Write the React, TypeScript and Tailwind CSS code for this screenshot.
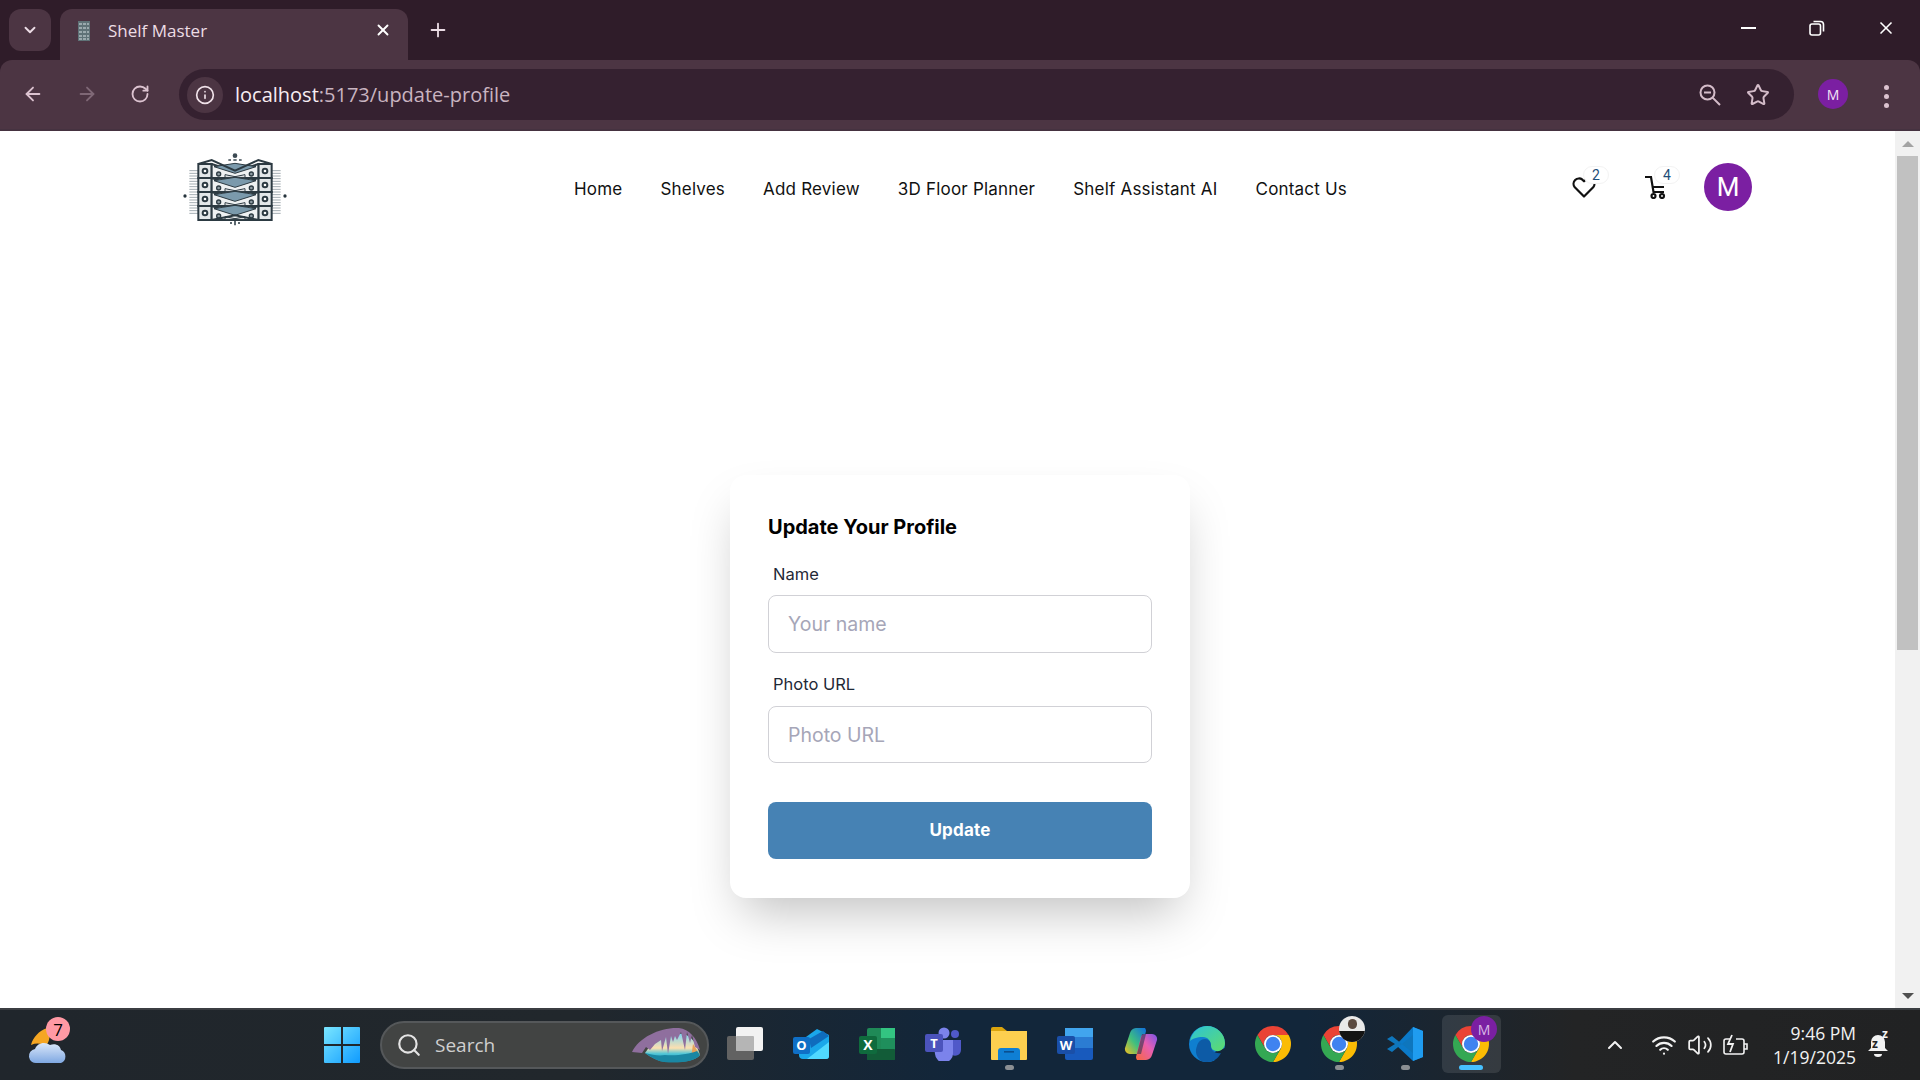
import { ArrowLeft, ArrowRight, ChevronDown, ChevronUp, Info, Plus, RotateCw, Search, Star, Volume2, Wifi, X } from 'lucide-react';
import type { ReactNode } from 'react';

const navLinks = ['Home', 'Shelves', 'Add Review', '3D Floor Planner', 'Shelf Assistant AI', 'Contact Us'];

function ShelfLogo({ size = 130 }: { size?: number }) {
  const levels = [72, 114, 156, 198];
  const hatch = [92, 100, 108, 116, 124, 132, 140, 148, 156, 164, 172, 180, 188, 196, 204, 212, 220];
  return (
    <svg width={size} height={(size * 100) / 130} viewBox="0 0 390 300" className="shrink-0">
      {hatch.map((y) => (
        <g key={y} stroke="#a3adb2" strokeWidth="3">
          <line x1="58" y1={y} x2="84" y2={y} />
          <line x1="304" y1={y} x2="332" y2={y} />
        </g>
      ))}
      <circle cx="45" cy="168" r="5" fill="#26343c" />
      <circle cx="345" cy="168" r="5" fill="#26343c" />
      <circle cx="195" cy="47" r="7" fill="#3c4a53" />
      <path d="M175 60h8M190 60h10M207 60h8M195 242v14M183 246v6M207 246v6" stroke="#3c4a53" strokeWidth="5" />
      {levels.map((y) => (
        <g key={y} stroke="#2c3a42" strokeWidth="6" fill="#fff">
          <rect x="85" y={y} width="40" height="42" fill="#e3e7e9" />
          <rect x="265" y={y} width="40" height="42" fill="#e3e7e9" />
          <path d={`M125 ${y}L195 ${y + 22}L265 ${y}V${y + 42}H125Z`} fill="#eef1f2" />
          <path d={`M132 ${y + 8}L195 ${y + 28}L258 ${y + 8}L195 ${y - 2}Z`} fill="#7b9aac" strokeWidth="3" />
          <path d={`M165 ${y + 32}L195 ${y + 38}L225 ${y + 32}V${y + 40}H165Z`} fill="#fff" strokeWidth="3" />
          <circle cx="105" cy={y + 21} r="7" />
          <circle cx="285" cy={y + 21} r="7" />
          <circle cx="146" cy={y + 30} r="6" fill="#8f9ca3" strokeWidth="4" />
          <circle cx="244" cy={y + 30} r="6" fill="#8f9ca3" strokeWidth="4" />
        </g>
      ))}
      <path d="M85 72L125 60L195 92L265 60L305 72" fill="none" stroke="#2c3a42" strokeWidth="6" />
      <path d="M85 240H125L195 226L265 240H305" fill="none" stroke="#2c3a42" strokeWidth="6" />
    </svg>
  );
}

function ChromeIcon() {
  return (
    <svg width="36" height="36" viewBox="2 2 44 44">
      <path d="M24 2A22 22 0 0 1 43.05 13H24A11 11 0 0 0 14.47 29.5L4.95 13A22 22 0 0 1 24 2Z" fill="#ea4335" />
      <path d="M43.05 13A22 22 0 0 1 24 46L33.53 29.5A11 11 0 0 0 24 13Z" fill="#fbbc04" />
      <path d="M24 46A22 22 0 0 1 4.95 13L14.47 29.5A11 11 0 0 0 33.53 29.5Z" fill="#34a853" />
      <circle cx="24" cy="24" r="11" fill="#fff" />
      <circle cx="24" cy="24" r="8.8" fill="#3f83f0" />
    </svg>
  );
}

function TaskView() {
  return (
    <svg width="36" height="34" viewBox="0 0 36 34">
      <rect x="0" y="9" width="27" height="24" rx="2" fill="#626262" />
      <rect x="9" y="0" width="27" height="24" rx="2" fill="#f2f2f2" />
      <rect x="9" y="9" width="18" height="15" rx="1" fill="#b5b5b5" />
    </svg>
  );
}

function Outlook() {
  return (
    <svg width="36" height="32" viewBox="0 0 36 32">
      <path d="M6 14L24 1L36 7V28a3 3 0 0 1-3 3H10a4 4 0 0 1-4-4Z" fill="#1aa7ea" />
      <path d="M14 31L36 14V28a3 3 0 0 1-3 3Z" fill="#50d9ff" />
      <path d="M16 11L30 3L36 8L18 20Z" fill="#0f6cbd" />
      <rect x="0" y="9" width="17" height="17" rx="2" fill="#0f6fc6" />
      <text x="8.5" y="22" textAnchor="middle" fontSize="13" fontWeight="700" fill="#fff" fontFamily="Open Sans, sans-serif">O</text>
    </svg>
  );
}

function Excel() {
  return (
    <svg width="36" height="32" viewBox="0 0 36 32">
      <rect x="8" y="0" width="28" height="32" rx="2" fill="#1f8a57" />
      <rect x="22" y="0" width="14" height="10" fill="#33c481" />
      <rect x="22" y="10" width="14" height="11" fill="#1f8f5c" />
      <rect x="8" y="21" width="28" height="11" rx="1" fill="#125c38" />
      <rect x="0" y="8" width="18" height="18" rx="2" fill="#0f6b3d" />
      <text x="9" y="22" textAnchor="middle" fontSize="14" fontWeight="700" fill="#fff" fontFamily="Open Sans, sans-serif">X</text>
    </svg>
  );
}

function Teams() {
  return (
    <svg width="36" height="34" viewBox="0 0 36 34">
      <circle cx="19" cy="6" r="5.5" fill="#7b83eb" />
      <circle cx="30" cy="7" r="4" fill="#5059c9" />
      <path d="M25 13h11v10a6 6 0 0 1-9 5Z" fill="#5059c9" />
      <path d="M8 13h20v13a9 9 0 0 1-18 1Z" fill="#7b83eb" />
      <rect x="0" y="7" width="18" height="18" rx="2" fill="#4b53bc" />
      <text x="9" y="21" textAnchor="middle" fontSize="13" fontWeight="700" fill="#fff" fontFamily="Open Sans, sans-serif">T</text>
    </svg>
  );
}

function Explorer() {
  return (
    <svg width="36" height="34" viewBox="0 0 36 34">
      <path d="M0 2a2 2 0 0 1 2-2h9l5 4h-16Z" fill="#dba40d" />
      <path d="M0 4h36v28a1 1 0 0 1-1 1H1a1 1 0 0 1-1-1Z" fill="#fdcf4f" />
      <path d="M7 33V24a3 3 0 0 1 3-3h16a3 3 0 0 1 3 3v9Z" fill="#0f7fd4" />
      <rect x="13" y="24" width="10" height="1.6" fill="#0a4f8f" />
    </svg>
  );
}

function Word() {
  return (
    <svg width="36" height="32" viewBox="0 0 36 32">
      <rect x="8" y="0" width="28" height="32" rx="2" fill="#185abd" />
      <rect x="8" y="0" width="28" height="9" fill="#41a5ee" />
      <rect x="8" y="9" width="28" height="11" fill="#2b7cd3" />
      <rect x="0" y="8" width="18" height="18" rx="2" fill="#1a4fa8" />
      <text x="9" y="22" textAnchor="middle" fontSize="13" fontWeight="700" fill="#fff" fontFamily="Open Sans, sans-serif">W</text>
    </svg>
  );
}

function Copilot() {
  return (
    <svg width="34" height="34" viewBox="0 0 34 34">
      <defs>
        <linearGradient id="copA" x1="0" y1="1" x2="1" y2="0">
          <stop offset="0" stopColor="#f5c01e" />
          <stop offset="0.45" stopColor="#3fbf7f" />
          <stop offset="1" stopColor="#0f6fe0" />
        </linearGradient>
        <linearGradient id="copB" x1="0" y1="1" x2="1" y2="0">
          <stop offset="0" stopColor="#f7683c" />
          <stop offset="0.55" stopColor="#e85fb0" />
          <stop offset="1" stopColor="#7a55e8" />
        </linearGradient>
      </defs>
      <path d="M12 1h9a5 5 0 0 1 1 3L17 24a4 4 0 0 1-4 3H6a5 5 0 0 1-5-6L6 6a7 7 0 0 1 6-5Z" fill="url(#copA)" />
      <path d="M22 33h-9a5 5 0 0 1-1-3l5-20a4 4 0 0 1 4-3h7a5 5 0 0 1 5 6l-5 15a7 7 0 0 1-6 5Z" fill="url(#copB)" />
      <path d="M18 7h4l-5 20h-4Z" fill="#1b2f4d" opacity="0.55" />
    </svg>
  );
}

function Edge() {
  return (
    <svg width="36" height="36" viewBox="0 0 36 36">
      <defs>
        <linearGradient id="edgeA" x1="0" y1="0" x2="1" y2="1">
          <stop offset="0" stopColor="#2cc3d8" />
          <stop offset="1" stopColor="#5fdc6c" />
        </linearGradient>
      </defs>
      <circle cx="18" cy="18" r="18" fill="#0f7fd0" />
      <path d="M36 22L23 27L26 36L36 36Z" fill="#12263a" />
      <path d="M1 15C3 5 11 0 18 0c10 0 18 8 18 17 0 5-4 9-9 8-4-1-5-3-5-5 0-5-3-9-8-9-6 0-11 2-13 4Z" fill="url(#edgeA)" />
      <path d="M16 13c4 0 6 3 6 7 0 5 5 8 10 7-3 6-8 9-14 9-4 0-7-1-8-3-3-4-4-8-2-13 1-4 4-7 8-7Z" fill="#0d5ba6" />
    </svg>
  );
}

function VsCode() {
  return (
    <svg width="36" height="36" viewBox="0 0 36 36">
      <path d="M26 1L36 5V31L26 35L9 19Z" fill="#0b7ac9" />
      <path d="M26 1L36 5V31L26 35Z" fill="#1f9cf0" />
      <path d="M26 9V27L5 10L0 13L8 18L0 23L5 26L26 9Z" fill="#0e76bd" />
    </svg>
  );
}

function Slot({ children, dot, active }: { children: ReactNode; dot?: boolean; active?: boolean }) {
  return (
    <div className="relative mt-[-2px] flex h-[58px] w-[66px] shrink-0 items-center justify-center">
      {active && <span className="absolute inset-y-0 left-[4px] right-[3px] rounded-md bg-white/10" />}
      <span className="relative flex">{children}</span>
      {dot && <span className="absolute bottom-[3px] h-[5px] w-[9px] rounded-full bg-[#8b8f93]" />}
      {active && <span className="absolute bottom-[3px] h-[5px] w-[24px] rounded-full bg-[#47c1ff]" />}
    </div>
  );
}

function SearchArt() {
  return (
    <svg width="70" height="36" viewBox="0 0 70 36" className="shrink-0">
      <defs>
        <linearGradient id="caveSky" x1="0" y1="0" x2="0" y2="1">
          <stop offset="0" stopColor="#7fd4f0" />
          <stop offset="0.5" stopColor="#fde0b0" />
          <stop offset="0.7" stopColor="#4fc6d8" />
          <stop offset="1" stopColor="#1d8ba8" />
        </linearGradient>
      </defs>
      <path d="M14 26C24 10 38 6 52 7c8 1 14 10 17 21-6 7-20 8-36 7-6-1-12-4-19-9Z" fill="url(#caveSky)" />
      <path d="M62 17l7 11-9 3Z" fill="#e6a25a" />
      <path d="M14 26c8 2 14 3 20 2 12 1 24-1 32-4l3 4c-6 7-20 8-36 7-6-1-12-4-19-9Z" fill="#1a87a3" />
      <path d="M1 25C8 10 30 0 48 1c10 1 18 10 21 22l-5-3-3-12-2 8-3-11-2 18-4-18-4 8-2-4-2 6-2-6-3 18-2-17-4 14-1-11-6 4-5 6-4-3-4 6Z" fill="#8f6f9e" />
    </svg>
  );
}

export default function App() {
  return (
    <div className="flex h-screen w-full flex-col overflow-hidden bg-white font-['Inter',sans-serif]">
      {/* browser chrome */}
      <div className="shrink-0 bg-[#2f1c29] font-['Open_Sans',sans-serif] text-[#ecdde5]">
        <div className="flex h-[60px] items-start pt-[9px]">
          <div className="ml-[9px] flex h-[42px] w-[42px] items-center justify-center rounded-[12px] bg-[#4c3543]">
            <ChevronDown size={18} strokeWidth={2.5} />
          </div>
          <div className="ml-[9px] flex h-[51px] w-[348px] items-center rounded-t-[12px] bg-[#4c3543] pb-[8px] pl-[17px] pr-[16px]">
            <svg width="12" height="20" viewBox="0 0 12 20" className="ml-[1px] shrink-0">
              <rect x="0" y="0" width="12" height="20" fill="#5f7277" />
              <path d="M1 3h10M1 7h10M1 11h10M1 15h10M1 18h10" stroke="#aebcc0" strokeWidth="1.5" strokeDasharray="3 1" />
            </svg>
            <span className="ml-[18px] text-[17px] leading-none">Shelf Master</span>
            <X size={18} strokeWidth={2.5} className="ml-auto mb-[2px] text-white" />
          </div>
          <Plus size={22} strokeWidth={2} className="ml-[19px] mt-[10px]" />
          <div className="ml-auto mt-[9px] flex items-center text-white">
            <span className="h-[2px] w-[15px] bg-white" />
            <svg width="16" height="16" viewBox="0 0 16 16" fill="none" stroke="#fff" strokeWidth="1.6" className="ml-[53px]">
              <rect x="1" y="4" width="10.5" height="11" rx="2" />
              <path d="M4.5 1.5h7a3 3 0 0 1 3 3v7" />
            </svg>
            <X size={20} strokeWidth={2} className="ml-[51px] mr-[24px]" />
          </div>
        </div>
        <div className="flex h-[71px] items-start rounded-t-[12px] border-b-2 border-[#453240] bg-[#4c3543] pt-[9px] text-[#dcc3d0]">
          <ArrowLeft size={22} className="ml-[22px] mt-[14px]" />
          <ArrowRight size={22} className="ml-[32px] mt-[14px] text-[#7f6876]" />
          <RotateCw size={20} strokeWidth={2.2} className="ml-[32px] mt-[15px]" />
          <div className="ml-[29px] flex h-[51px] w-[1615px] shrink-0 items-center rounded-full bg-[#352130] pl-[8px] pr-[24px]">
            <div className="flex h-[36px] w-[36px] items-center justify-center rounded-full bg-[#4c3543]">
              <Info size={20} className="text-[#f0e2e9]" />
            </div>
            <span className="ml-[12px] text-[20px] leading-none text-[#c9b4c0]">
              <span className="text-[#f7edf2]">localhost</span>:5173/update-profile
            </span>
            <svg width="24" height="24" viewBox="0 0 24 24" fill="none" stroke="#d4bcc9" strokeWidth="2" className="ml-auto">
              <circle cx="9.5" cy="9.5" r="7" />
              <path d="M6 9.5h7M14.6 14.6l7.4 7.4" />
            </svg>
            <Star size={24} strokeWidth={2} className="ml-[24px] text-[#d4bcc9]" />
          </div>
          <div className="ml-[24px] mt-[10px] flex h-[30px] w-[30px] items-center justify-center rounded-full bg-[#7b1fa2] text-[14px] text-[#f3e5f5]">M</div>
          <div className="ml-[36px] mt-[16px] flex flex-col gap-[4px]">
            <span className="h-[5px] w-[5px] rounded-full bg-[#dcc3d0]" />
            <span className="h-[5px] w-[5px] rounded-full bg-[#dcc3d0]" />
            <span className="h-[5px] w-[5px] rounded-full bg-[#dcc3d0]" />
          </div>
        </div>
      </div>

      {/* page */}
      <div className="flex min-h-0 flex-1">
        <div className="min-w-0 flex-1 overflow-hidden">
          <nav className="flex h-[109px] items-center pl-[170px] pr-[143px] pt-[9px]">
            <ShelfLogo />
            <ul className="ml-[274px] flex gap-[38px] pb-[1px] text-[17px] tracking-[0.2px] text-[#111]">
              {navLinks.map((link) => (
                <li key={link}>{link}</li>
              ))}
            </ul>
            <div className="ml-auto flex items-center pb-[6px]">
              <div className="relative h-[24px] w-[24px]">
                <svg width="24" height="22" viewBox="0 0 24 22" fill="none" stroke="#111" strokeWidth="2.2" strokeLinejoin="round" className="mt-[1px]">
                  <path d="M12 20.5L2.8 11.3a5.4 5.4 0 0 1 7.6-7.6L12 5.3l1.6-1.6a5.4 5.4 0 0 1 7.6 7.6Z" />
                </svg>
                <span className="absolute left-[11px] top-[-9px] flex h-[18px] w-[26px] items-center justify-center rounded-full border border-[#f3f3f3] bg-white font-['Roboto',sans-serif] text-[14px] text-[#1f4e79]">2</span>
              </div>
              <div className="relative ml-[46px] h-[24px] w-[24px]">
                <svg width="24" height="24" viewBox="0 0 24 24" fill="none" stroke="#111" strokeWidth="2.2">
                  <path d="M3 2h6l2.5 15H22M10 12h12" />
                  <circle cx="11.5" cy="21" r="2" />
                  <circle cx="20" cy="21" r="2" />
                </svg>
                <span className="absolute left-[12px] top-[-9px] flex h-[18px] w-[26px] items-center justify-center rounded-full border border-[#f3f3f3] bg-white font-['Roboto',sans-serif] text-[14px] text-[#1f4e79]">4</span>
              </div>
              <div className="ml-[38px] flex h-[48px] w-[48px] items-center justify-center rounded-full bg-[#7b1fa2] font-['Roboto',sans-serif] text-[26px] text-white">M</div>
            </div>
          </nav>

          <main className="flex justify-center pl-[25px] pt-[235px]">
            <form className="flex w-[460px] flex-col rounded-2xl bg-white px-[38px] pb-[39px] pt-[38px] shadow-2xl">
              <h2 className="text-[20px] font-bold leading-[28px] text-black">Update Your Profile</h2>
              <label className="ml-[5px] mt-[21px] text-[16.5px] leading-[24px] text-[#1f2937]">Name</label>
              <input
                placeholder="Your name"
                className="mt-[9px] h-[58px] rounded-lg border border-[#d1d1d6] bg-white pl-[19px] text-[19.5px] outline-none placeholder:text-[#a6a6b8]"
              />
              <label className="ml-[5px] mt-[19px] text-[16.5px] leading-[24px] text-[#1f2937]">Photo URL</label>
              <input
                placeholder="Photo URL"
                className="mt-[10px] h-[57px] rounded-lg border border-[#d1d1d6] bg-white pl-[19px] text-[19.5px] outline-none placeholder:text-[#a6a6b8]"
              />
              <button type="button" className="mt-[39px] h-[57px] rounded-lg bg-[#4682b4] pt-[1px] text-[17px] font-bold tracking-[0.2px] text-white">
                Update
              </button>
            </form>
          </main>
        </div>

        {/* scrollbar */}
        <div className="flex w-[25px] shrink-0 flex-col items-center bg-[#f1f1f1]">
          <div className="mt-[10px] h-0 w-0 border-x-[6px] border-b-[6px] border-x-transparent border-b-[#a3a3a3]" />
          <div className="mt-[9px] h-[494px] w-[21px] bg-[#c1c1c1]" />
          <div className="mb-[9px] mt-auto h-0 w-0 border-x-[6px] border-t-[6px] border-x-transparent border-t-[#505050]" />
        </div>
      </div>

      {/* windows taskbar */}
      <div className="flex h-[72px] shrink-0 items-center border-t-2 border-[#3b3e42] bg-[linear-gradient(90deg,#20262c_0%,#21272c_30%,#12263a_50%,#12263a_68%,#232425_82%,#212223_100%)] font-['Open_Sans',sans-serif] text-white">
        <div className="relative ml-[25px] h-[48px] w-[48px]">
          <svg width="48" height="48" viewBox="0 0 48 48">
            <defs>
              <linearGradient id="cloud" x1="0" y1="0" x2="0" y2="1">
                <stop offset="0" stopColor="#dbe8fa" />
                <stop offset="1" stopColor="#7fa8e2" />
              </linearGradient>
            </defs>
            <path d="M22 7c-8 3-14 9-16 17 5-2 10-2 14 1 5-3 6-12 2-18Z" fill="#f5a623" />
            <path d="M12 42a7 7 0 0 1-2-14c2-6 10-8 15-4 5-2 10 0 11 5a7 7 0 0 1 0 13Z" fill="url(#cloud)" />
          </svg>
          <span className="absolute left-[21px] top-[-4px] flex h-[24px] w-[24px] items-center justify-center rounded-full bg-[#ff99a4] text-[17px] leading-none text-black">7</span>
        </div>
        <svg width="36" height="36" viewBox="0 0 36 36" className="ml-[251px] shrink-0">
          <defs>
            <linearGradient id="win" x1="0" y1="0" x2="1" y2="1">
              <stop offset="0" stopColor="#7ae6ff" />
              <stop offset="1" stopColor="#0f9bff" />
            </linearGradient>
          </defs>
          <path d="M0 1a1 1 0 0 1 1-1h16v17H0ZM19 0h16a1 1 0 0 1 1 1v16H19ZM0 19h17v17H1a1 1 0 0 1-1-1ZM19 19h17v16a1 1 0 0 1-1 1H19Z" fill="url(#win)" />
        </svg>
        <div className="ml-[20px] flex h-[48px] w-[329px] shrink-0 items-center rounded-full border-2 border-[#55585a] bg-[#424443] pl-[14px] pr-[6px]">
          <Search size={26} strokeWidth={2} className="text-[#e4e4e4]" />
          <span className="ml-[13px] text-[19px] leading-none text-[#cfcfcf]">Search</span>
          <div className="ml-auto">
            <SearchArt />
          </div>
        </div>
        <div className="ml-[3px] flex items-center">
          <Slot><TaskView /></Slot>
          <Slot><Outlook /></Slot>
          <Slot><Excel /></Slot>
          <Slot><Teams /></Slot>
          <Slot dot><Explorer /></Slot>
          <Slot><Word /></Slot>
          <Slot><Copilot /></Slot>
          <Slot><Edge /></Slot>
          <Slot><ChromeIcon /></Slot>
          <Slot dot>
            <ChromeIcon />
            <span className="absolute left-[18px] top-[-10px] flex h-[26px] w-[26px] items-start justify-center overflow-hidden rounded-full bg-[#e9e9e9]">
              <span className="mt-[3px] h-[10px] w-[9px] rounded-full bg-[#5b4a40]" />
              <span className="absolute bottom-0 h-[11px] w-[26px] bg-[#141414]" />
            </span>
          </Slot>
          <Slot dot><VsCode /></Slot>
          <Slot active>
            <ChromeIcon />
            <span className="absolute left-[18px] top-[-10px] flex h-[26px] w-[26px] items-center justify-center rounded-full bg-[#7b1fa2] text-[14px] text-[#d9b8e6]">M</span>
          </Slot>
        </div>
        <ChevronUp size={24} strokeWidth={2} className="ml-[99px] text-[#f2f2f2]" />
        <Wifi size={26} strokeWidth={2} className="ml-[24px] text-[#f2f2f2]" />
        <Volume2 size={26} strokeWidth={1.6} className="ml-[10px] text-[#f2f2f2]" />
        <svg width="26" height="22" viewBox="0 0 26 22" fill="none" stroke="#f2f2f2" strokeWidth="1.6" className="ml-[9px]">
          <path d="M8 5H4a2 2 0 0 0-2 2v11a2 2 0 0 0 2 2h16a2 2 0 0 0 2-2V7a2 2 0 0 0-2-2h-6" />
          <path d="M22 10h3v5h-3" />
          <path d="M10 1L6 10h5l-3 8" strokeWidth="1.8" />
        </svg>
        <div className="ml-auto flex flex-col items-end text-[17.5px] leading-[24px] text-[#f2f2f2]">
          <span>9:46 PM</span>
          <span>1/19/2025</span>
        </div>
        <div className="relative ml-[11px] mr-[31px] h-[26px] w-[22px]">
          <svg width="22" height="26" viewBox="0 0 22 26" fill="#f2f2f2">
            <path d="M11 3a7 7 0 0 1 7 7v6l3 3H1l3-3v-6a7 7 0 0 1 7-7Z" />
            <path d="M7 22h8a4 3 0 0 1-8 0Z" />
          </svg>
          <span className="absolute left-[5px] top-[6px] text-[12px] font-bold leading-none text-[#212223]">z</span>
          <span className="absolute left-[15px] top-[-4px] text-[12px] font-bold leading-none text-[#f2f2f2]">z</span>
        </div>
      </div>
    </div>
  );
}
